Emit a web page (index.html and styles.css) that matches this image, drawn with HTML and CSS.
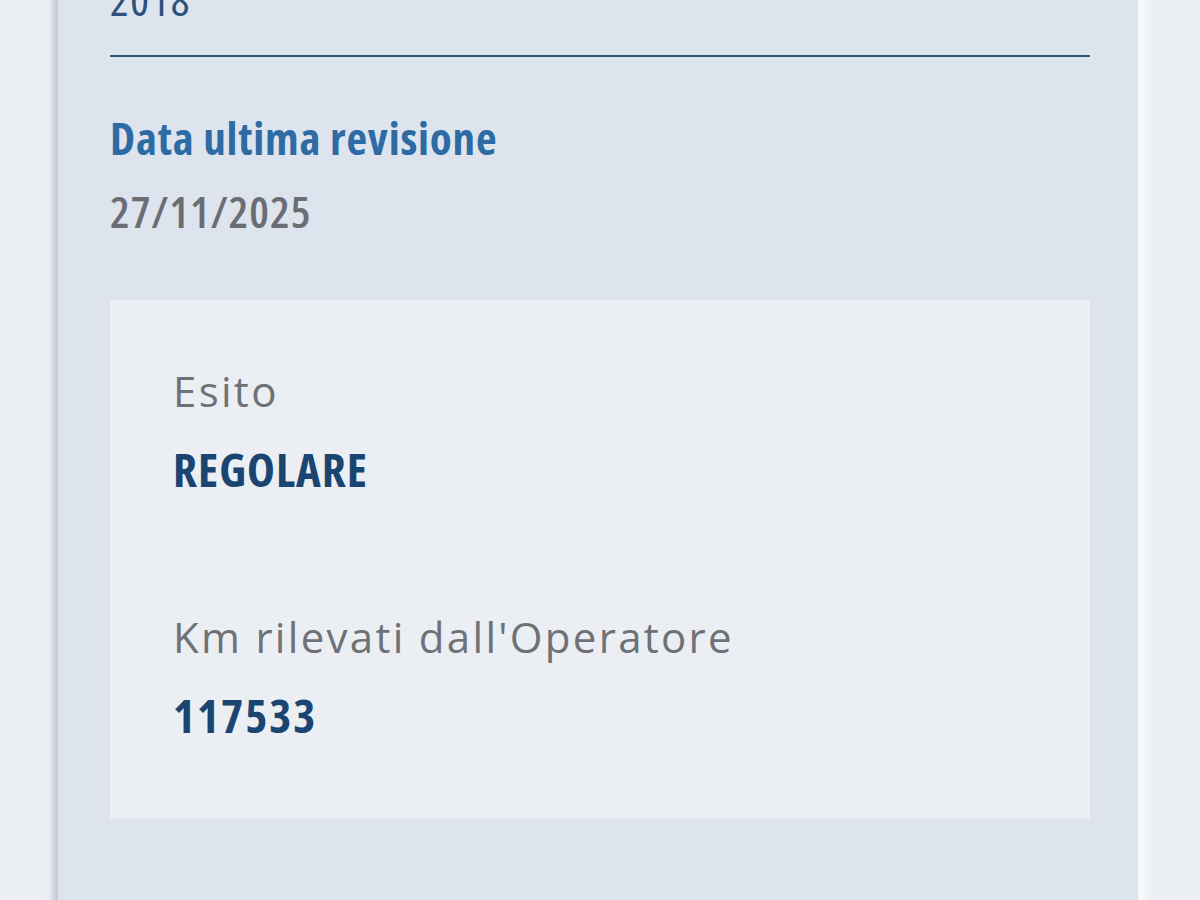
FILE: index.html
```html
<!DOCTYPE html>
<html lang="it">

<head>
    <meta charset="UTF-8">
    <meta name="viewport" content="width=device-width, initial-scale=1.0">
    <title>Revisione</title>
    <link rel="stylesheet" href="styles.css">
</head>

<body>
    <div id="page">
        <div id="card">
            <div class="field-value year">2018</div>
            <div class="divider"></div>

            <div class="field-title">Data ultima revisione</div>
            <div class="field-value date">27/11/2025</div>

            <div id="detail-box">
                <div class="detail-label">Esito</div>
                <div class="detail-value">REGOLARE</div>

                <div class="detail-label km">Km rilevati dall'Operatore</div>
                <div class="detail-value number">117533</div>
            </div>
        </div>
    </div>
</body>

</html>
```

FILE: styles.css
```css
html,
body {
    margin: 0;
    padding: 0;
    height: 100%;
    overflow: hidden;
    background-color: #eceff3;
}

#page {
    padding-left: 58px;
}

#card {
    width: 1080px;
    min-height: 960px;
    box-sizing: border-box;
    padding: 0 48px 0 52px;
    background-color: #dde4ee;
    box-shadow: -5px 0 6px rgba(110, 125, 145, 0.35), 12px 0 8px -4px #f8f9fb;
}

.year {
    margin-top: -27px;
    letter-spacing: 1.5px;
    color: #2b517c;
}

.divider {
    height: 2px;
    margin-top: 30px;
    background-color: #2a5680;
}

.field-title {
    margin-top: 55px;
    font-family: "Open Sans", sans-serif;
    font-stretch: 75%;
    font-weight: bold;
    font-size: 45px;
    line-height: 52px;
    letter-spacing: 0.8px;
    color: #2d6ba4;
}

.field-value {
    font-family: "Open Sans", sans-serif;
    font-stretch: 75%;
    font-size: 44px;
    line-height: 52px;
}

.date {
    margin-top: 21px;
    font-weight: 600;
    letter-spacing: 1px;
    color: #6a6d72;
}

#detail-box {
    margin-top: 63px;
    padding: 66px 63px 76px;
    background-color: #ebeef3;
}

.detail-label {
    font-family: "Open Sans", sans-serif;
    font-size: 42px;
    line-height: 50px;
    letter-spacing: 2.3px;
    color: #6e7175;
}

.detail-label.km {
    margin-top: 115px;
}

.detail-value {
    margin-top: 25px;
    font-family: "Open Sans", sans-serif;
    font-stretch: 75%;
    font-weight: bold;
    font-size: 47px;
    line-height: 56px;
    letter-spacing: 1px;
    color: #1a4571;
}

.detail-value.number {
    letter-spacing: 2px;
}
```
